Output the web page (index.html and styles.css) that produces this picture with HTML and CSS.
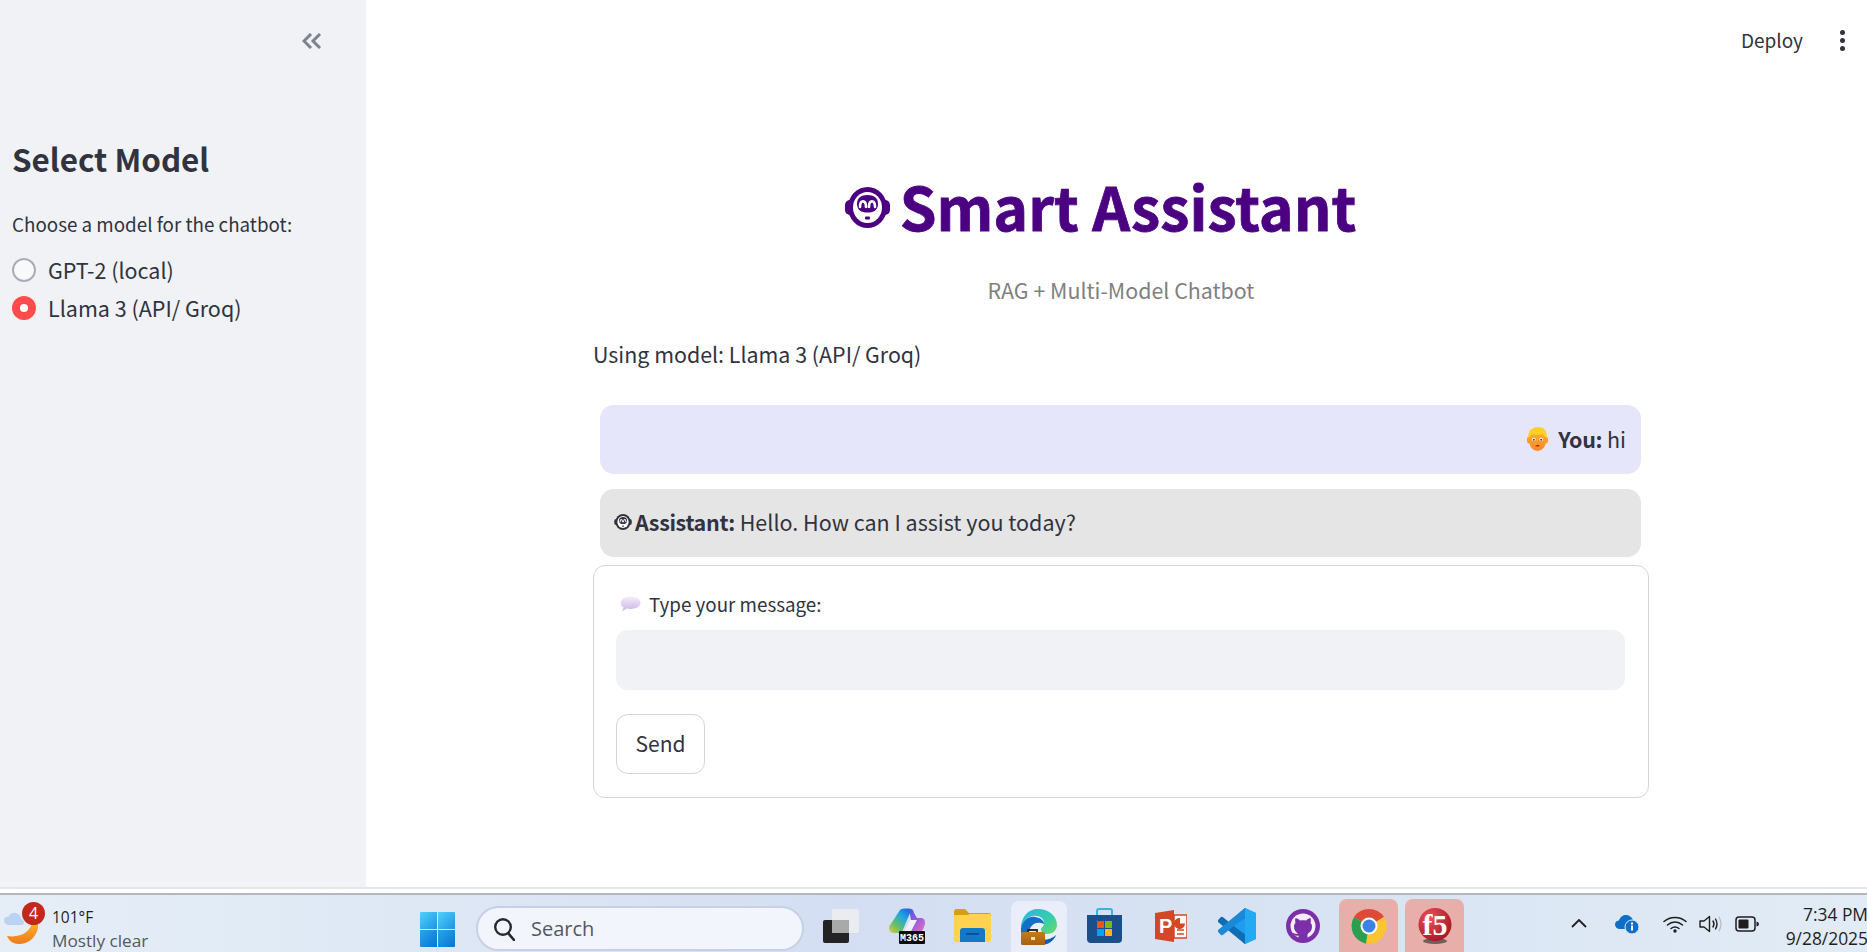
FILE: index.html
```html
<!DOCTYPE html>
<html lang="en">
<head>
<meta charset="utf-8">
<title>Smart Assistant</title>
<link rel="stylesheet" href="styles.css">
</head>
<body>
<svg class="defs" width="0" height="0" aria-hidden="true">
  <defs>
    <symbol id="robot" viewBox="0 0 45 41">
      <rect x="0" y="13" width="45" height="15" rx="5" fill="currentColor"/>
      <ellipse cx="22.500" cy="20.500" rx="19.500" ry="20.500" fill="currentColor"/>
      <ellipse cx="22.500" cy="20.500" rx="14.500" ry="15.500" fill="#fff"/>
      <path fill="currentColor" d="M22.500 8C16 8 12 11 12 17C12 23 16 25.500 22.500 25.500C29 25.500 33 23 33 17C33 11 29 8 22.500 8Z"/>
      <path fill="none" stroke="#fff" stroke-width="2.600" stroke-linecap="round" d="M15 20C15 12.500 21 12.500 21 20M24 20C24 12.500 30 12.500 30 20"/>
      <rect x="20" y="29.500" width="5" height="3" rx="1" fill="currentColor"/>
    </symbol>
  </defs>
</svg>

<div class="app">
  <aside class="sidebar">
    <div class="side-top">
      <svg class="chevrons" width="20" height="16" viewBox="0 0 20 16"><path d="M9 1L2 8L9 15M18 1L11 8L18 15" fill="none" stroke="#7f828e" stroke-width="3"/></svg>
    </div>
    <h2 class="side-title">Select Model</h2>
    <p class="side-label">Choose a model for the chatbot:</p>
    <div class="radio-row"><span class="radio"></span><span class="radio-text">GPT-2 (local)</span></div>
    <div class="radio-row"><span class="radio radio-on"></span><span class="radio-text">Llama 3 (API/ Groq)</span></div>
  </aside>

  <main class="main">
    <header class="toolbar">
      <span class="deploy">Deploy</span>
      <span class="kebab"><i></i><i></i><i></i></span>
    </header>
    <div class="content">
      <h1 class="title"><svg class="title-icon" width="45" height="41"><use href="#robot"/></svg><span>Smart Assistant</span></h1>
      <p class="subtitle">RAG + Multi-Model Chatbot</p>
      <p class="using">Using model: Llama 3 (API/ Groq)</p>
      <div class="bubble bubble-user">
        <svg class="man" width="21" height="24" viewBox="0 0 21 24">
          <defs>
            <linearGradient id="skin" x1="0" y1="0" x2="0" y2="1"><stop offset="0" stop-color="#ffb52e"/><stop offset="1" stop-color="#f8862a"/></linearGradient>
          </defs>
          <ellipse cx="2" cy="13" rx="2" ry="3.500" fill="#f79a2a"/>
          <ellipse cx="19" cy="13" rx="2" ry="3.500" fill="#f79a2a"/>
          <ellipse cx="10.500" cy="13.500" rx="8.500" ry="10.500" fill="url(#skin)"/>
          <path d="M1.500 12C0 4 5 0 11 0C17 0 21 4 19.500 12C18.500 9 16 7 12 7.500C8 8 5 7 4 8C2.800 9 2 10 1.500 12Z" fill="#ffd02a"/>
          <circle cx="6.800" cy="12.500" r="1.800" fill="#fff"/><circle cx="14.200" cy="12.500" r="1.800" fill="#fff"/>
          <circle cx="6.800" cy="12.700" r="1" fill="#4a3a32"/><circle cx="14.200" cy="12.700" r="1" fill="#4a3a32"/>
          <path d="M8 18.500Q10.500 17.500 13 18.500Q10.500 20.500 8 18.500Z" fill="#a81c0c"/>
        </svg>
        <span class="bubble-text"><b>You:</b> hi</span>
      </div>
      <div class="bubble bubble-bot">
        <svg class="bot-icon" width="18" height="16"><use href="#robot"/></svg>
        <span class="bubble-text"><b>Assistant:</b> Hello. How can I assist you today?</span>
      </div>
      <form class="card">
        <div class="card-label">
          <svg class="balloon" width="21" height="16" viewBox="0 0 21 16">
            <defs><linearGradient id="bal" x1="0" y1="0" x2="0" y2="1"><stop offset="0" stop-color="#f5effa"/><stop offset="1" stop-color="#cdb4e6"/></linearGradient></defs>
            <path d="M10.500 0.500C16 0.500 20.500 3 20.500 6.800C20.500 10.500 16 13 10.500 13C9 13 7.500 12.800 6.500 12.500C5 14 3 15 1.500 15C3 13.800 3.500 12.500 3.300 11.200C1.500 10 0.500 8.500 0.500 6.800C0.500 3 5 0.500 10.500 0.500Z" fill="url(#bal)"/>
          </svg>
          <span>Type your message:</span>
        </div>
        <div class="input"></div>
        <button class="send" type="button">Send</button>
      </form>
    </div>
  </main>
</div>

<div class="gap-strip"></div>

<footer class="taskbar">
  <div class="weather">
    <svg class="weather-icon" width="34" height="38" viewBox="0 0 34 38">
      <defs><linearGradient id="moon" x1="0" y1="0" x2="0" y2="1"><stop offset="0" stop-color="#fcb72c"/><stop offset="1" stop-color="#ef7a1d"/></linearGradient></defs>
      <path d="M35 13C35 28 26 37 15 37C9 37 5 34 3 29C17 31 27 25 29 13Z" fill="url(#moon)"/>
      <path d="M6 18C2 18 0 16 0 13.500C0 11 2 9.500 4.500 9.500C6 6.500 9 5 12 6C15 7 17 9 17 12C19 12.500 20 14 20 15.500C20 17 19 18 17 18Z" fill="#bcd2f2"/>
    </svg>
    <span class="badge">4</span>
    <div class="weather-text"><span class="temp">101°F</span><span class="sky">Mostly clear</span></div>
  </div>

  <svg class="win" width="35" height="35" viewBox="0 0 35 35">
    <defs>
      <linearGradient id="w1" x1="0" y1="0" x2="1" y2="1"><stop offset="0" stop-color="#52d1fb"/><stop offset="1" stop-color="#1b94e4"/></linearGradient>
      <linearGradient id="w2" x1="0" y1="0" x2="1" y2="1"><stop offset="0" stop-color="#2aa6ea"/><stop offset="1" stop-color="#0675d3"/></linearGradient>
    </defs>
    <path d="M1 0H17V17H0V1Q0 0 1 0Z" fill="url(#w1)"/>
    <path d="M18 0H34Q35 0 35 1V17H18Z" fill="url(#w1)"/>
    <path d="M0 18H17V35H1Q0 35 0 34Z" fill="url(#w2)"/>
    <path d="M18 18H35V34Q35 35 34 35H18Z" fill="url(#w2)"/>
  </svg>

  <div class="search">
    <svg width="22" height="24" viewBox="0 0 22 24"><circle cx="10" cy="10" r="7.800" fill="none" stroke="#26282c" stroke-width="2.400"/><path d="M15.500 16.500L21 23" stroke="#26282c" stroke-width="2.600" stroke-linecap="round"/></svg>
    <span>Search</span>
  </div>

  <div class="apps">
    <div class="app-cell">
      <svg width="36" height="34" viewBox="0 0 36 34">
        <rect x="0" y="11" width="26" height="23" rx="2" fill="#232323"/>
        <rect x="9" y="0" width="27" height="24" rx="2" fill="#ecedef" fill-opacity=".9"/>
        <rect x="9" y="11" width="17" height="13" fill="#a9a9a9"/>
      </svg>
    </div>
    <div class="app-cell">
      <svg width="36" height="36" viewBox="0 0 36 36">
        <defs>
          <linearGradient id="cop1" x1="0" y1="1" x2=".8" y2="0"><stop offset="0" stop-color="#e2c83a"/><stop offset=".35" stop-color="#62c06a"/><stop offset=".7" stop-color="#22a8e0"/><stop offset="1" stop-color="#1a6fe0"/></linearGradient>
          <linearGradient id="cop2" x1="0" y1="0" x2="1" y2="1"><stop offset="0" stop-color="#3058e0"/><stop offset=".5" stop-color="#9a5ae0"/><stop offset="1" stop-color="#f07ab0"/></linearGradient>
        </defs>
        <path d="M11 2Q12 0.500 15 0.500H20Q23 1 21 5L13 24Q12 25 9 25H5Q-1 25 0.500 18Z" fill="url(#cop1)"/>
        <path d="M20 1Q24 0 25 5L28 10H33Q36.500 11 36 16Q35 21 31 26Q29 27.500 26 27.500H15L22 12Z" fill="url(#cop2)"/>
        <path d="M21 12H28L20 27H14Z" fill="#f2f0fb"/>
        <rect x="10" y="23" width="26" height="13" fill="#0d0d0d" rx="1"/>
        <text x="23" y="33" class="m365">M365</text>
      </svg>
    </div>
    <div class="app-cell">
      <svg width="37" height="33" viewBox="0 0 37 33">
        <path d="M0 3Q0 0 3 0H11L15 4H35Q37 4 37 6V12H0Z" fill="#d69f12"/>
        <path d="M0 6H14L16 5H36Q37 5 37 7V31Q37 33 35 33H2Q0 33 0 31Z" fill="#ffd34f"/>
        <path d="M6 33V22Q6 19 9 19H28Q31 19 31 22V33Z" fill="#1478c8"/>
        <rect x="12" y="24" width="13" height="1.800" fill="#0b4f92"/>
      </svg>
    </div>
    <div class="app-cell app-active">
      <svg width="36" height="36" viewBox="0 0 36 36">
        <defs>
          <linearGradient id="edge" x1="0" y1="0" x2="1" y2="1"><stop offset="0" stop-color="#2bb5e6"/><stop offset=".6" stop-color="#38cfa8"/><stop offset="1" stop-color="#74d95c"/></linearGradient>
          <linearGradient id="case" x1="0" y1="0" x2="0" y2="1"><stop offset="0" stop-color="#c87a18"/><stop offset="1" stop-color="#a85f10"/></linearGradient>
        </defs>
        <path d="M17 0C28 0 36 7 36 16C36 21 32 25 26 25C22 25 20 23 20 20.500C20 18.500 23 18 23 14C23 9 18 6 12 7C6 8 2 13 0 19C0 8 7 0 17 0Z" fill="url(#edge)"/>
        <path d="M0 19C2 11 8 7 14 8C20 9 23 12 23 15C17 12 9 14 8 24L0 24Z" fill="#1470c6"/>
        <path d="M16 30C24 32 31 30 35 26C33 32 27 36 20 36H16Z" fill="#0e5fb0"/>
        <path d="M7 24V21H16V24" fill="none" stroke="#2b2b2b" stroke-width="1.800"/>
        <rect x="0" y="23" width="24" height="13" rx="1.500" fill="url(#case)"/>
        <rect x="10" y="28" width="4" height="3" fill="#ffe0a0"/>
      </svg>
    </div>
    <div class="app-cell">
      <svg width="35" height="35" viewBox="0 0 35 35">
        <path d="M10 9V3Q10 1 12 1H23Q25 1 25 3V9" fill="none" stroke="#35b4e8" stroke-width="2"/>
        <path d="M0 7H35V31Q35 35 31 35H4Q0 35 0 31Z" fill="#1a4f8c"/>
        <rect x="10" y="13" width="7" height="7" fill="#f25022"/>
        <rect x="18" y="13" width="7" height="7" fill="#7fba00"/>
        <rect x="10" y="21" width="7" height="7" fill="#00a4ef"/>
        <rect x="18" y="21" width="7" height="7" fill="#ffb900"/>
      </svg>
    </div>
    <div class="app-cell">
      <svg width="32" height="32" viewBox="0 0 32 32">
        <path d="M19 0V32L0 29V3Z" fill="#d24726"/>
        <path d="M19 5H32V28H19Z" fill="#fff" stroke="#d24726" stroke-width="1.500"/>
        <path d="M22 24H29M22 20H29" stroke="#d24726" stroke-width="1.600"/>
        <path d="M25 8A5.500 5.500 0 1 0 30 13.500H25Z" fill="#d24726"/>
        <text x="4" y="23" class="ppt">P</text>
      </svg>
    </div>
    <div class="app-cell">
      <svg width="38" height="36" viewBox="0 0 38 36">
        <path d="M27 0L38 5V31L27 36L10 19L27 8Z" fill="#1f9cf0"/>
        <path d="M27 0L38 5V31L27 36V26L27 10Z" fill="#24aaf2"/>
        <path d="M27 0L6 18L27 36V26L14 18L27 10Z" fill="#0a78c6"/>
        <path d="M6 10L27 27V36L0 14Q-1 13 1 11L3 9Q4 8 6 10Z" fill="#0e6eb4"/>
        <path d="M6 26L27 9V0L0 22Q-1 23 1 25L3 27Q4 28 6 26Z" fill="#1a8ad8"/>
      </svg>
    </div>
    <div class="app-cell">
      <svg width="34" height="34" viewBox="0 0 34 34">
        <circle cx="17" cy="17" r="17" fill="#7b2fa8"/>
        <circle cx="17" cy="17" r="12.500" fill="#f4eef8"/>
        <path d="M12.500 31V26.500C9 27.500 7.500 25.500 6.500 23.500C8.500 24.500 10 25.500 12 24.500C9.500 23 8 21 8 17.500C8 16 8.500 15 9.500 14C9 12.500 9 11 9.500 9C11.500 9.500 13 10.500 14 11.500C16 11 18 11 20 11.500C21 10.500 22.500 9.500 24.500 9C25 11 25 12.500 24.500 14C25.500 15 26 16 26 17.500C26 21 24.500 23 22 24.500C21.500 25 21.500 26 21.500 27V31Z" fill="#7b2fa8"/>
      </svg>
    </div>
    <div class="app-cell app-alert">
      <svg width="36" height="36" viewBox="0 0 36 36">
        <path d="M18 18L3 9A18 18 0 0 1 33 9Z" fill="#dd4a36"/>
        <path d="M18 18L3 9A18 18 0 0 0 15 35.700Z" fill="#2c9e50"/>
        <path d="M18 18L33 9A18 18 0 0 1 15 35.700Z" fill="#fbc52f"/>
        <circle cx="18" cy="18" r="8.500" fill="#fff"/>
        <circle cx="18" cy="18" r="6.500" fill="#3b82e6"/>
      </svg>
    </div>
    <div class="app-cell app-alert">
      <svg width="34" height="36" viewBox="0 0 34 36">
        <defs><radialGradient id="f5g" cx=".35" cy=".3" r=".85"><stop offset="0" stop-color="#f05058"/><stop offset="1" stop-color="#9c0f1e"/></radialGradient></defs>
        <ellipse cx="17" cy="33" rx="12" ry="3" fill="#6d5f5c"/>
        <circle cx="17" cy="16.500" r="16.500" fill="url(#f5g)"/>
        <text x="17" y="27" class="f5">f5</text>
      </svg>
    </div>
  </div>

  <div class="tray">
    <svg class="t-chev" width="16" height="9" viewBox="0 0 16 9"><path d="M1 8L8 1L15 8" fill="none" stroke="#1e1e1e" stroke-width="1.800"/></svg>
    <svg class="t-cloud" width="24" height="20" viewBox="0 0 24 20">
      <path d="M5 15C2 15 0 13 0 10.500C0 8 2 6.500 4 6.500C5 3 8 1 11 1C14 1 17 3 18 6C20 6.500 21 8 21 10V15Z" fill="#0f6fc6"/>
      <circle cx="17" cy="13" r="7" fill="#0f6fc6" stroke="#e1ebf6" stroke-width="1"/>
      <rect x="16" y="11.500" width="2" height="5" fill="#fff"/><rect x="16" y="8.500" width="2" height="2" fill="#fff"/>
    </svg>
    <svg class="t-wifi" width="24" height="18" viewBox="0 0 24 18">
      <path d="M1 6.500C7 1 17 1 23 6.500M4.500 10C9 6 15 6 19.500 10M8 13.500C10.500 11.500 13.500 11.500 16 13.500" fill="none" stroke="#1e1e1e" stroke-width="1.500" stroke-linecap="round"/>
      <circle cx="12" cy="16" r="1.700" fill="#1e1e1e"/>
    </svg>
    <svg class="t-vol" width="24" height="18" viewBox="0 0 24 18">
      <path d="M1 6H5L10.500 1.500V16.500L5 12H1Z" fill="none" stroke="#1e1e1e" stroke-width="1.400" stroke-linejoin="round"/>
      <path d="M14 6Q16 9 14 12M16.500 4Q19.500 9 16.500 14" fill="none" stroke="#1e1e1e" stroke-width="1.400" stroke-linecap="round"/>
      <path d="M20 2Q24 9 20 16" fill="none" stroke="#b6bdc8" stroke-width="1.300" stroke-linecap="round"/>
    </svg>
    <svg class="t-batt" width="24" height="16" viewBox="0 0 24 16">
      <rect x="1" y="1" width="19" height="14" rx="3" fill="none" stroke="#1e1e1e" stroke-width="1.500"/>
      <rect x="3.500" y="3.500" width="10" height="9" rx="1" fill="#1e1e1e"/>
      <path d="M21.500 5.500Q24 6 24 8Q24 10 21.500 10.500Z" fill="#1e1e1e"/>
    </svg>
    <div class="clock"><span>7:34 PM</span><span>9/28/2025</span></div>
  </div>
</footer>
</body>
</html>
```

FILE: styles.css
```css
* { box-sizing: border-box; }

html, body {
  margin: 0;
  padding: 0;
  width: 1867px;
  height: 952px;
  overflow: hidden;
  background: #fff;
  font-family: "Noto Sans CJK SC", "Noto Sans", sans-serif;
  color: #31333f;
}

.defs { position: absolute; }

.app {
  display: flex;
  height: 887px;
}

/* Sidebar */
.sidebar {
  width: 366px;
  flex: none;
  background: #f0f2f6;
  padding: 0 12px;
}
.side-top {
  display: flex;
  justify-content: flex-end;
  padding: 33px 32px 0 0;
  height: 133px;
}
.chevrons { display: block; }
.side-title {
  margin: 0;
  font-size: 31.400px;
  line-height: 52px;
  font-weight: 600;
}
.side-label {
  margin: 25px 0 0;
  font-size: 18.800px;
  line-height: 28px;
}
.radio-row {
  display: flex;
  align-items: center;
  height: 38px;
  gap: 12px;
}
.side-label + .radio-row { margin-top: 13px; }
.radio {
  width: 24px;
  height: 24px;
  border-radius: 50%;
  background: #f9f9fb;
  border: 2px solid #a9adb8;
  flex: none;
}
.radio-on {
  background: #fff;
  border: 8px solid #ff4b4b;
}
.radio-text {
  font-size: 21.500px;
  line-height: 30px;
}

/* Main */
.main {
  flex: 1;
  min-width: 0;
}
.toolbar {
  height: 80px;
  display: flex;
  align-items: center;
  justify-content: flex-end;
  padding-right: 22px;
}
.deploy {
  font-size: 19px;
  line-height: 28px;
  margin-right: 37px;
}
.kebab {
  display: flex;
  flex-direction: column;
  gap: 3px;
}
.kebab i {
  display: block;
  width: 5px;
  height: 5px;
  border-radius: 50%;
  background: #31333f;
}
.content {
  margin-left: 227px;
  width: 1056px;
}
.title {
  margin: 96px 0 0;
  padding-right: 41px;
  height: 60px;
  display: flex;
  justify-content: center;
  align-items: center;
  gap: 10px;
  font-size: 59px;
  line-height: 60px;
  font-weight: 700;
  color: #4b0082;
  -webkit-text-stroke: 0.8px #4b0082;
}
.title-icon { flex: none; margin-top: 2px; }
.subtitle {
  margin: 39px 0 0;
  text-align: center;
  font-size: 21.400px;
  line-height: 30px;
  color: #808080;
}
.using {
  margin: 34px 0 0;
  font-size: 21.400px;
  line-height: 30px;
}
.bubble {
  margin: 0 8px 0 7px;
  border-radius: 14px;
  display: flex;
  align-items: center;
  font-size: 21.500px;
  line-height: 32px;
}
.bubble-user {
  margin-top: 36px;
  height: 69px;
  background: #e6e6fa;
  justify-content: flex-end;
  padding: 0 15px 2px 0;
  gap: 10px;
}
.bubble-bot {
  margin-top: 15px;
  height: 68px;
  background: #e5e5e5;
  padding: 0 0 2px 14px;
  gap: 3px;
}
.bubble-text { white-space: pre; }
.bubble-text b { font-weight: 600; letter-spacing: -0.350px; }
.card {
  margin-top: 8px;
  height: 233px;
  border: 1px solid #d3d4d8;
  border-radius: 12px;
  padding: 0 23px 0 22px;
  display: flex;
  flex-direction: column;
  align-items: flex-start;
}
.card-label {
  display: flex;
  align-items: center;
  height: 28px;
  margin: 24px 0 0 4px;
  gap: 8px;
  font-size: 18.800px;
  line-height: 28px;
}
.input {
  width: 100%;
  height: 60px;
  margin-top: 12px;
  border-radius: 12px;
  background: #f0f2f6;
}
.send {
  margin-top: 24px;
  width: 89px;
  height: 60px;
  padding: 0 0 2px;
  border: 1px solid #d3d4d8;
  border-radius: 12px;
  background: #fff;
  font: 400 21px/30px "Noto Sans CJK SC", "Noto Sans", sans-serif;
  color: #31333f;
}

/* Strip between page and taskbar */
.gap-strip {
  height: 8px;
  background: #fff;
  border-top: 2px solid #e6e6e6;
  border-bottom: 2px solid #b4b8be;
}

/* Taskbar */
.taskbar {
  height: 57px;
  display: flex;
  align-items: flex-end;
  background: linear-gradient(90deg, #e5eef7 0%, #dfe9f5 20%, #d4def2 45%, #d8e3f3 70%, #e2ecf6 100%);
  font-family: "Open Sans", "Noto Sans", sans-serif;
  color: #1f1f1f;
  overflow: hidden;
}
.weather {
  position: relative;
  width: 420px;
  height: 57px;
  flex: none;
  display: flex;
}
.weather-icon {
  margin: 12px 0 0 4px;
  flex: none;
}
.badge {
  position: absolute;
  left: 22px;
  top: 7px;
  width: 23px;
  height: 23px;
  border-radius: 50%;
  background: #c4281c;
  color: #fff;
  font-size: 16px;
  line-height: 23px;
  text-align: center;
}
.weather-text {
  display: flex;
  flex-direction: column;
  margin-left: 14px;
  padding-top: 10px;
  white-space: nowrap;
}
.temp { font-size: 15.500px; line-height: 24px; }
.sky { font-size: 17.200px; line-height: 24px; color: #55585e; }
.win {
  flex: none;
  align-self: flex-start;
  margin-top: 17px;
}
.search {
  flex: none;
  width: 328px;
  height: 45px;
  margin: 0 7px 1px 21px;
  background: #f2f5fc;
  border: 2px solid #c7d0e4;
  border-radius: 23px;
  display: flex;
  align-items: center;
  gap: 16px;
  padding-left: 15px;
  font-size: 20px;
  color: #55585e;
}
.apps {
  display: flex;
  gap: 7px;
  flex: none;
}
.app-cell {
  width: 59px;
  height: 53px;
  border-radius: 8px 8px 0 0;
  display: flex;
  align-items: center;
  justify-content: center;
  padding-bottom: 0;
}
.app-active {
  background: #e9eef9;
  margin: 2px 1px 0 2px;
  width: 56px;
  height: 51px;
}
.app-alert { background: #e8aeaa; }
.m365 {
  font: 700 10px "Liberation Mono", monospace;
  fill: #fff;
  text-anchor: middle;
}
.ppt {
  font: 700 20px "Liberation Sans", sans-serif;
  fill: #fff;
}
.f5 {
  font: 700 30px "Liberation Serif", serif;
  fill: #fff;
  text-anchor: middle;
}
.tray {
  display: flex;
  align-items: center;
  flex: none;
  height: 57px;
  margin-left: 107px;
  width: 297px;
}
.t-chev { margin-right: 28px; flex: none; }
.t-cloud { margin-right: 24px; flex: none; }
.t-wifi { margin-right: 12px; flex: none; }
.t-vol { margin-right: 12px; flex: none; }
.t-batt { flex: none; }
.clock {
  margin-left: auto;
  display: flex;
  flex-direction: column;
  align-items: flex-end;
  padding-top: 5px;
  font-size: 17.400px;
  line-height: 24px;
  white-space: nowrap;
}
```
